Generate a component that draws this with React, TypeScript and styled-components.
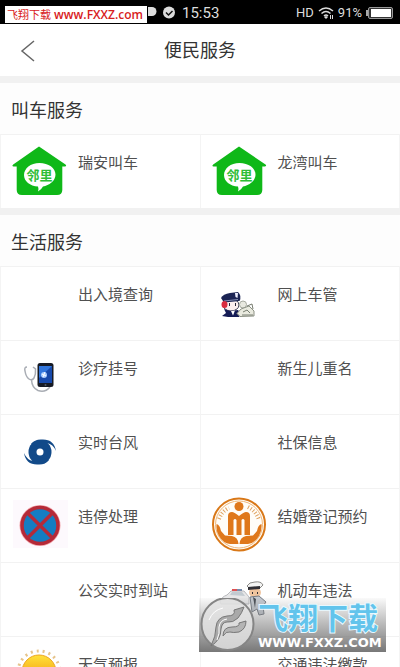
import React from "react";
import styled, { createGlobalStyle } from "styled-components";

const GlobalStyle = createGlobalStyle`
  * { box-sizing: border-box; }
  body {
    margin: 0;
    background: #fff;
    font-family: Roboto, "Noto Sans CJK SC", sans-serif;
  }
`;

const Screen = styled.div`
  position: relative;
  display: flex;
  flex-direction: column;
  height: 100vh;
  overflow: hidden;
  background: #fff;
`;

const StatusBar = styled.div`
  position: relative;
  display: flex;
  flex: none;
  align-items: center;
  justify-content: space-between;
  height: 24px;
  padding: 2px 7px 0 148px;
  background: #000;
  color: #ddd;
`;

const StatusGroup = styled.div`
  display: flex;
  align-items: center;
  gap: 4px;
  font-size: 13px;
  line-height: 16px;
`;

const Clock = styled.span`
  font-size: 15px;
`;

const SiteBanner = styled.div`
  position: absolute;
  left: 5px;
  top: 6px;
  display: flex;
  align-items: center;
  gap: 3px;
  width: 142px;
  height: 17px;
  padding-left: 2px;
  background: #fff;
  color: #d8201c;
  font: 600 12px/17px "Open Sans", "Noto Sans CJK SC", sans-serif;
  white-space: nowrap;
`;

const BannerName = styled.span`
  font-size: 11px;
  font-weight: 400;
`;

const Header = styled.header`
  display: grid;
  flex: none;
  grid-template-columns: 56px 1fr 56px;
  align-items: center;
  height: 52px;
  padding-top: 2px;
`;

const BackButton = styled.button`
  display: flex;
  align-items: center;
  height: 48px;
  padding: 0 0 0 20px;
  border: 0;
  background: none;
`;

const PageTitle = styled.h1`
  margin: 0;
  color: #333;
  font-size: 18px;
  font-weight: 400;
  line-height: 24px;
  text-align: center;
`;

const Content = styled.main`
  flex: 1;
  min-height: 0;
  overflow-y: auto;
  scrollbar-width: none;
`;

const Section = styled.section`
  border-top: 7px solid #f1f1f1;
`;

const SectionTitle = styled.h2`
  display: flex;
  align-items: center;
  height: 51px;
  margin: 0;
  padding-left: 11px;
  background: #fdfdfd;
  color: #333;
  font-size: 18px;
  font-weight: 400;
`;

const ServiceGrid = styled.div`
  display: grid;
  grid-template-columns: 1fr 1fr;
  grid-auto-rows: 74px;
  border-right: 1px solid #f4f4f4;
`;

const ServiceLink = styled.a`
  display: flex;
  gap: 12px;
  padding: 9px 0 0 11px;
  border-top: 1px solid #f2f2f2;
  border-left: 1px solid #f4f4f4;
  color: #505050;
  font-size: 15px;
  line-height: 24px;
  text-decoration: none;
  white-space: nowrap;
`;

const IconSlot = styled.span`
  flex: none;
  width: 54px;
  height: 54px;

  svg {
    display: block;
    overflow: visible;
  }
`;

const ServiceName = styled.span`
  padding-top: 7px;
`;

const Watermark = styled.div`
  position: absolute;
  right: 14px;
  bottom: 15px;
  display: flex;
  gap: 3px;
  width: 187px;
  height: 54px;
  background: linear-gradient(rgba(150, 150, 150, 0.05), rgba(125, 125, 125, 0.55) 50%, rgba(105, 105, 105, 0.9));
  pointer-events: none;

  svg { flex: none; }
`;

const WatermarkText = styled.div`
  display: flex;
  flex-direction: column;
  white-space: nowrap;
`;

const WatermarkName = styled.span`
  color: #62c4ec;
  font: 700 30px/36px "Noto Sans CJK SC", sans-serif;
  -webkit-text-stroke: 2px #e9f9ff;
  paint-order: stroke fill;
`;

const WatermarkSite = styled.span`
  color: #fff;
  font: 700 13px/18px "DejaVu Sans", sans-serif;
`;

const Icon = ({ children }: { children: React.ReactNode }) => (
  <svg width="54" height="54" viewBox="0 0 54 54" fill="none" aria-hidden="true">
    {children}
  </svg>
);

const HouseIcon = () => (
  <Icon>
    <path
      fill="#0fb818"
      d="M27 2.5 53.5 20.5Q55 22 53 22.5H50.3V46Q50.3 51 45 51H10Q4.7 51 4.7 46V22.5H1.500Q-.5 22 1.200 20.500Z"
    />
    <path
      fill="#fff"
      d="M27.500 19C36.500 19 43.500 24 43.500 30.500S37 41.500 31 42.500Q29.500 45.500 26 47.500Q27 45 26 42.500C18 42 12 37.500 12 31S18.500 19 27.500 19Z"
    />
    <text x="14.500" y="35.500" fill="#2ebd35" fontSize="13" fontWeight="700" fontFamily="Noto Sans CJK SC, sans-serif">
      邻里
    </text>
  </Icon>
);

const OfficerIcon = () => (
  <Icon>
    <ellipse cx="19" cy="29" rx="8" ry="6" fill="#fbeef0" stroke="#33344d" />
    <path fill="#1b2454" d="M9 22Q11 18 18 17L26 16Q30 20 27.500 25L12 26.500Z" />
    <path stroke="#8991b4" d="m12 25 14-1.500" />
    <path fill="#eef0ff" d="m23 17 3 0-.5 5-2-1Z" />
    <ellipse cx="12.500" cy="28.500" rx="3" ry="3.500" fill="#d92c40" />
    <path fill="#26253a" d="M17 27h1v3h-1zM23 27h1v3h-1z" />
    <path fill="#141b55" d="m12 33 6 2 8-1 3 4-2 3H16l-6-1 4-3Z" />
    <path fill="#fff" d="m19 35 4-.5-2 5Z" />
    <circle cx="31" cy="28.500" r="3.500" fill="#e8e9e0" stroke="#a7aaa0" />
    <path fill="#e9eadf" stroke="#8c9184" d="m29 33 8-3 5 5v5l-14 .5-3-3Z" />
    <path stroke="#777d70" d="m31 36 4-2 3 3M30 39l11 0M35 30l5-2 1 5" />
  </Icon>
);

const ClinicIcon = () => (
  <Icon>
    <path stroke="#a9adb4" strokeWidth="1.500" d="M15 17Q12 17 13 21Q14 27 17 29Q20 31 22 28Q24 24 23.500 19L21 17M19.500 30Q20 38 26 40.500Q33 43 38 37" />
    <rect x="25.500" y="13" width="16" height="24" rx="2.500" fill="#161a24" />
    <path fill="#1749ab" d="M27 16h13v17H27z" />
    <path fill="#3276dc" d="M27 16h13l-13 12z" />
    <circle cx="32" cy="25" r="3" fill="#a8ccff" />
    <path stroke="#fff" d="m30 24 4 2M33 22l-2 5" />
    <circle cx="33.500" cy="35" r="1" fill="#525865" />
  </Icon>
);

const TyphoonIcon = () => (
  <Icon>
    <ellipse cx="28" cy="28" rx="11.500" ry="12" fill="#124a89" />
    <path fill="#124a89" d="M19 20Q23 15 30 15.500Q42 15 44 27Q41 20 35 19L36 26Z" />
    <path fill="#124a89" d="M37 36Q33 41 26 40.500Q14 41 12 29Q15 36 21 37L20 30Z" />
    <circle cx="28" cy="28" r="3.500" fill="#fff" />
  </Icon>
);

const NoStoppingIcon = () => (
  <Icon>
    <path fill="#fdf9fd" d="M1 2h55v48H1z" />
    <circle cx="28" cy="27.500" r="20.500" fill="#f1a2a8" />
    <circle cx="28" cy="27.500" r="18" fill="#147dc2" stroke="#b52a38" strokeWidth="3.500" />
    <path stroke="#b52a38" strokeWidth="3.500" d="m15 14.500 26 26m0-26-26 26" />
  </Icon>
);

const MarriageIcon = () => (
  <Icon>
    <circle cx="27" cy="26.500" r="26" fill="#fffdf8" stroke="#d97818" strokeWidth="2" />
    <circle cx="27" cy="26.500" r="23.500" stroke="#efb77a" />
    <g fill="#df781b">
      <circle cx="27" cy="8.500" r="4.500" />
      <path d="M16 37V18Q16 14 20 14Q22 14 27 18Q32 14 34 14Q38 14 38 18V37H32.500V22Q31 20 29.500 22V37H24.500V22Q23 20 21.500 22V37Z" />
      <path d="M4.500 26Q8 27 9 33L13 37.500 20 38Q26 39 26.500 46H18Q11 45 7 38Q4 33 4.500 26Z" />
      <path d="M49.500 26Q46 27 45 33L41 37.500 34 38Q28 39 27.500 46H36Q43 45 47 38Q50 33 49.500 26Z" />
    </g>
    <path stroke="#dfa25f" strokeWidth="4" strokeDasharray="1 2" d="M7 21Q10 13 17 10M36 9Q44 13 47 22" />
  </Icon>
);

const TrafficIcon = () => (
  <Icon>
    <path fill="#e7e7e8" stroke="#b9babe" d="M8 30q1-5 7-7l4-4h13l5 6v7H9z" />
    <path fill="#c2cad0" d="m18 23 2-3h10l3 4z" />
    <path fill="#de5152" d="M20 17h5v2h-5z" />
    <path fill="#788cac" d="M25 17h5v2h-5z" />
    <ellipse cx="43" cy="20.500" rx="6" ry="5" fill="#efc49e" />
    <path fill="#f4f4f3" stroke="#8a8986" d="M35 14q2-4 8-4 6-1 8 3l-3 3H37z" />
    <path fill="#302f35" d="m36 15 12-1v3l-12 1zM40 20h1v2h-1zM45 20h1v2h-1z" />
    <path fill="#c4c9d0" stroke="#737982" d="m38 25 9-1 7 6-3 4 1 8-5 1-2-6-5 3z" />
    <path fill="#454a51" d="m41 25 3 2-1 9z" />
  </Icon>
);

const SunIcon = () => (
  <Icon>
    <defs>
      <linearGradient id="sun" x2="0" y2="1">
        <stop stopColor="#ffe23a" />
        <stop offset="1" stopColor="#ee8100" />
      </linearGradient>
    </defs>
    <circle cx="27" cy="26" r="21" stroke="#e6c48c" strokeWidth="3" strokeDasharray="2 4" />
    <circle cx="27" cy="26" r="17" fill="url(#sun)" stroke="#eda622" />
  </Icon>
);

interface Service {
  name: string;
  icon?: React.ComponentType;
}

const sections: { title: string; services: Service[] }[] = [
  {
    title: "叫车服务",
    services: [
      { name: "瑞安叫车", icon: HouseIcon },
      { name: "龙湾叫车", icon: HouseIcon },
    ],
  },
  {
    title: "生活服务",
    services: [
      { name: "出入境查询" },
      { name: "网上车管", icon: OfficerIcon },
      { name: "诊疗挂号", icon: ClinicIcon },
      { name: "新生儿重名" },
      { name: "实时台风", icon: TyphoonIcon },
      { name: "社保信息" },
      { name: "违停处理", icon: NoStoppingIcon },
      { name: "结婚登记预约", icon: MarriageIcon },
      { name: "公交实时到站" },
      { name: "机动车违法", icon: TrafficIcon },
      { name: "天气预报", icon: SunIcon },
      { name: "交通违法缴款" },
    ],
  },
];

export default function App() {
  return (
    <Screen>
      <GlobalStyle />
      <StatusBar>
        <StatusGroup>
          <svg width="30" height="14" viewBox="0 0 30 14" aria-hidden="true">
            <path fill="#ddd" d="M0 1h4a4.500 4.500 0 0 1 0 9H0z" />
            <circle cx="21" cy="6.500" r="6" fill="#ddd" />
            <path d="m18 6.500 2.500 2.500 4-4" fill="none" stroke="#111" strokeWidth="1.500" />
          </svg>
          <Clock>15:53</Clock>
        </StatusGroup>
        <StatusGroup>
          <span>HD</span>
          <svg width="16" height="12" viewBox="0 0 16 12" fill="none" stroke="#ddd" strokeWidth="1.500" aria-hidden="true">
            <path d="M1 4Q8-2 15 4M3.500 6.500q4.500-4 9 0M6 9q2-2 4 0" />
            <path fill="#ddd" stroke="none" d="m8 9 2 1-2 2-2-2zM12 8h1v4h-1zM14 8h1v4h-1z" />
          </svg>
          <span>91%</span>
          <svg width="27" height="12" viewBox="0 0 27 12" aria-hidden="true">
            <path fill="#aaa" d="M0 3h2v6H0z" />
            <rect x="2.500" y=".5" width="24" height="11" rx="1.500" fill="#333" stroke="#999" />
            <path fill="#fff" d="M5 2h20v8H5z" />
          </svg>
        </StatusGroup>
        <SiteBanner>
          <BannerName>飞翔下载</BannerName>
          <span>www.FXXZ.com</span>
        </SiteBanner>
      </StatusBar>

      <Header>
        <BackButton aria-label="返回">
          <svg width="15" height="22" viewBox="0 0 15 22" fill="none" stroke="#666" strokeWidth="1.500" aria-hidden="true">
            <path d="M14 1 2 11l12 10" />
          </svg>
        </BackButton>
        <PageTitle>便民服务</PageTitle>
      </Header>

      <Content>
        {sections.map(({ title, services }) => (
          <Section key={title}>
            <SectionTitle>{title}</SectionTitle>
            <ServiceGrid>
              {services.map(({ name, icon: ServiceIcon }) => (
                <ServiceLink href="#" key={name}>
                  <IconSlot>{ServiceIcon && <ServiceIcon />}</IconSlot>
                  <ServiceName>{name}</ServiceName>
                </ServiceLink>
              ))}
            </ServiceGrid>
          </Section>
        ))}
      </Content>

      <Watermark>
        <svg width="56" height="54" viewBox="0 0 56 54" aria-hidden="true">
          <circle cx="28.500" cy="26" r="26" fill="#e2e2e2" fillOpacity=".85" stroke="#858585" strokeWidth="2" />
          <path
            fill="#a9a9a9"
            stroke="#777"
            d="M12 48Q17 38 17 29Q18 19 28 18Q37 18 35 12L45 9Q43 15 39 20Q34 25 28 24Q23 24 22 31Q22 42 12 48Z"
          />
          <path fill="#b4b4b4" stroke="#777" d="M24 38Q24 29 33 29Q41 29 40 25L47 23Q47 31 40 34Q34 35 31 34Q27 33 24 38Z" />
          <path fill="none" stroke="#fff" d="M10 22Q14 12 24 10M18 42Q21 35 20 29Q21 22 28 21" />
        </svg>
        <WatermarkText>
          <WatermarkName>飞翔下载</WatermarkName>
          <WatermarkSite>WWW.FXXZ.COM</WatermarkSite>
        </WatermarkText>
      </Watermark>
    </Screen>
  );
}
